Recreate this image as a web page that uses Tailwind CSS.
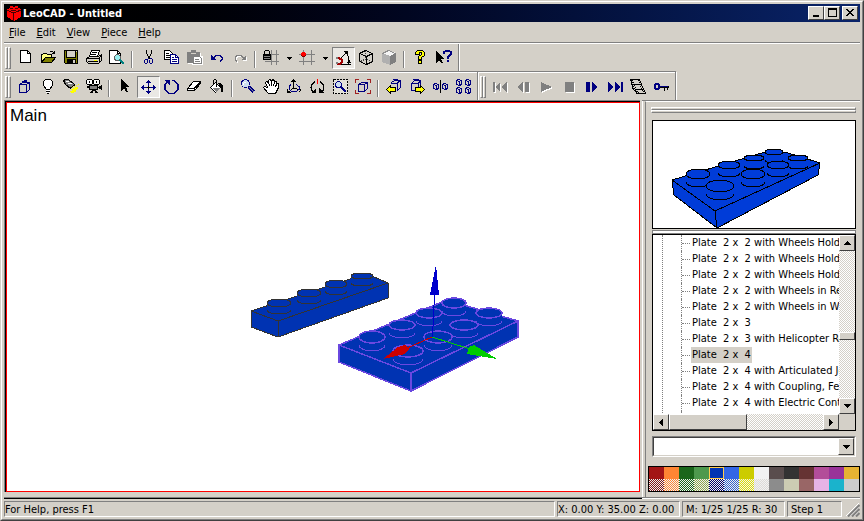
<!DOCTYPE html>
<html lang="en">
<head>
    <meta charset="UTF-8">
    <meta name="viewport" content="width=device-width, initial-scale=1.0">
    <title>LeoCAD - Untitled</title>
    <script src="https://cdn.jsdelivr.net/npm/@tailwindcss/browser@4"></script>
</head>
<body class="h-screen overflow-hidden bg-[#d4d0c8] font-['DejaVu_Sans_Condensed','DejaVu_Sans',sans-serif] text-[11px] leading-4 text-black">
<div class="h-full border border-t-[#d4d0c8] border-l-[#d4d0c8] border-r-[#404040] border-b-[#404040]">
<div class="flex h-full flex-col border border-t-white border-l-white border-r-[#808080] border-b-[#808080] p-[2px]">

    <!-- Title bar -->
    <header class="flex h-[18px] shrink-0 items-center bg-linear-to-r from-black to-[#0a246a] pr-[2px] pl-[2px]">
        <svg class="h-4 w-4" viewBox="0 0 16 16" shape-rendering="crispEdges">
            <path fill="#f00" d="M1 4l3-1V1h3v1h2V1h3v2l3 1v8l-7 4-7-4z"/>
            <path fill="none" stroke="#400" d="M1 5l6.500 3L15 5M7.500 8v8M4 3.500h3M9 3.500h3M5 5.500h5"/>
        </svg>
        <h1 class="flex-1 pt-[1px] pl-[1px] font-bold text-white">LeoCAD - Untitled</h1>
        <button aria-label="Minimize" class="flex h-[14px] w-4 items-center justify-center border border-t-white border-l-white border-r-[#404040] border-b-[#404040] bg-[#d4d0c8]">
            <svg class="h-[10px] w-3" viewBox="0 0 12 10" shape-rendering="crispEdges"><path d="M3 7h6v2H3z"/></svg>
        </button>
        <button aria-label="Maximize" class="flex h-[14px] w-4 items-center justify-center border border-t-white border-l-white border-r-[#404040] border-b-[#404040] bg-[#d4d0c8]">
            <svg class="h-[10px] w-3" viewBox="0 0 12 10" shape-rendering="crispEdges"><path d="M2 0h9v9H2zM3 2v6h7V2z" fill-rule="evenodd"/></svg>
        </button>
        <button aria-label="Close" class="ml-[2px] flex h-[14px] w-4 items-center justify-center border border-t-white border-l-white border-r-[#404040] border-b-[#404040] bg-[#d4d0c8]">
            <svg class="h-[10px] w-3" viewBox="0 0 12 10" shape-rendering="crispEdges"><path d="M2 1h2v1h1v1h2V2h1V1h2v1H9v1H8v1H7v1h1v1h1v1h1v1H8V7H7V6H5v1H4v1H2V7h1V6h1V5h1V4H4V3H3V2H2z"/></svg>
        </button>
    </header>

    <!-- Menu bar -->
    <nav class="flex h-5 shrink-0 items-center gap-[11px] pt-[1px] pl-[5px]">
        <button><u>F</u>ile</button>
        <button><u>E</u>dit</button>
        <button><u>V</u>iew</button>
        <button><u>P</u>iece</button>
        <button><u>H</u>elp</button>
    </nav>

    <!-- Standard toolbar -->
    <div class="flex h-[29px] shrink-0 border-t border-[#808080]">
        <div class="flex flex-1 border-t border-white">
            <div class="flex w-[455px] shrink-0 items-start border-r border-[#808080] pt-[3px]">
                <span class="mr-1 ml-[1px] h-[22px] w-[3px] border border-t-white border-l-white border-r-[#808080] border-b-[#808080]"></span>
                <span class="-ml-1 mr-[3px] h-[22px] w-[3px] border border-t-white border-l-white border-r-[#808080] border-b-[#808080]"></span>
                <button aria-label="New" class="flex h-[22px] w-[23px] items-center justify-center">
                    <svg class="h-4 w-[17px]" viewBox="0 0 17 16" shape-rendering="crispEdges"><path fill="#fff" stroke="#000" d="M3.500.5h7l3 3v9h-10z"/><path fill="none" stroke="#000" d="M10.500.5v3h3"/></svg>
                </button>
                <button aria-label="Open" class="flex h-[22px] w-[23px] items-center justify-center">
                    <svg class="h-4 w-[17px]" viewBox="0 0 17 16" shape-rendering="crispEdges"><path fill="#ffff80" stroke="#000" d="M1.500 12.500v-8h1l1-1h3l1 1h4v3h-6z"/><path fill="#808000" stroke="#000" d="M1.500 12.500l4-5h10l-4 5z"/><path fill="none" stroke="#000" d="M9.500 2.500l1-1h2l2 2M14.500 1v3M12 3.500h3"/></svg>
                </button>
                <button aria-label="Save" class="flex h-[22px] w-[23px] items-center justify-center">
                    <svg class="h-4 w-[17px]" viewBox="0 0 17 16" shape-rendering="crispEdges"><path fill="#808000" stroke="#000" d="M1.500.5h13v13h-12l-1-1z"/><path fill="#d4d0c8" stroke="#000" d="M3.500.5h9v7h-9z"/><path d="M4 9h9v5H4z"/><path fill="#d4d0c8" d="M10 10h2v3h-2zM13 1h1v1h-1z"/></svg>
                </button>
                <button aria-label="Print" class="flex h-[22px] w-[23px] items-center justify-center">
                    <svg class="h-4 w-[17px]" viewBox="0 0 17 16" shape-rendering="crispEdges"><path fill="#fff" stroke="#000" d="M5.500.5h8l-2 6h-8z"/><path fill="none" stroke="#000" d="M6 2.500h5M5 4.500h5"/><path fill="#d4d0c8" stroke="#000" d="M.5 8.500l3-2h9l3-2v6l-3 3h-10l-2-2z"/><path fill="none" stroke="#000" d="M1 8.500h12v4M2 11.500h10M13 8.500l2-3"/><path fill="#ff0" d="M8 10h3v1H8z"/></svg>
                </button>
                <button aria-label="Print Preview" class="flex h-[22px] w-[23px] items-center justify-center">
                    <svg class="h-4 w-[17px]" viewBox="0 0 17 16" shape-rendering="crispEdges"><path fill="#fff" stroke="#000" d="M.5.5h8l3 3v10H.5z"/><path fill="none" stroke="#000" d="M8.500.5v3h3"/><circle cx="8.500" cy="7.500" r="3" fill="#9ee" stroke="#606060"/><path fill="none" stroke="#008080" stroke-width="2" d="M11 10l4 4"/></svg>
                </button>
                <span class="mr-1 ml-[2px] h-[17px] w-[2px] self-center border-r border-l border-r-white border-l-[#808080]"></span>
                <button aria-label="Cut" class="flex h-[22px] w-[23px] items-center justify-center">
                    <svg class="h-4 w-[17px]" viewBox="0 0 17 16" shape-rendering="crispEdges"><path fill="none" stroke="#000" d="M6.500 0v3l3 6M11.500 0v3l-3 6"/><path fill="none" stroke="#000080" d="M8.500 8.500l-1 1h-2l-1 1v2l1 1h1l1-1v-3M9.500 8.500h2l1 1v3l-1 1h-1l-1-1v-3"/></svg>
                </button>
                <button aria-label="Copy" class="flex h-[22px] w-[23px] items-center justify-center">
                    <svg class="h-4 w-[17px]" viewBox="0 0 17 16" shape-rendering="crispEdges"><path fill="#fff" stroke="#000" d="M1.500.5h5l3 3v6h-8z"/><path fill="none" stroke="#000" d="M3 3.500h3M3 5.500h4M3 7.500h4"/><path fill="#fff" stroke="#000080" d="M7.500 4.500h5l3 3v6h-8z"/><path fill="none" stroke="#000080" d="M12.500 4.500v3h3M9 7.500h2M9 9.500h5M9 11.500h5"/></svg>
                </button>
                <button aria-label="Paste" disabled class="flex h-[22px] w-[23px] items-center justify-center">
                    <svg class="h-4 w-[17px]" viewBox="0 0 17 16" shape-rendering="crispEdges"><path fill="#fff" d="M2 3h13v3h2v9H6v-1H2z"/><path fill="#808080" d="M1 2h4V0h5v2h4v4H8v7H1z"/><path fill="#d4d0c8" d="M5 3h5v1H5z"/><path fill="#fff" stroke="#808080" d="M7.500 6.500h6l2 2v5h-8z"/><path stroke="#808080" d="M9 9.500h4M9 11.500h5"/></svg>
                </button>
                <button aria-label="Undo" class="flex h-[22px] w-[23px] items-center justify-center">
                    <svg class="h-4 w-[17px]" viewBox="0 0 17 16" shape-rendering="crispEdges"><path fill="#000080" d="M2 5l5 5H2z"/><path fill="none" stroke="#000080" d="M4 8.500l3-3h4l2 2v2l-2 2"/></svg>
                </button>
                <button aria-label="Redo" disabled class="flex h-[22px] w-[23px] items-center justify-center">
                    <svg class="h-4 w-[17px]" viewBox="0 0 17 16" shape-rendering="crispEdges"><path fill="#fff" d="M15 6l-5 5h5z"/><path fill="none" stroke="#fff" d="M13 9.500l-3-3H6l-2 2v2l2 2"/><path fill="#808080" d="M14 5l-5 5h5z"/><path fill="none" stroke="#808080" d="M12 8.500l-3-3H5l-2 2v2l2 2"/></svg>
                </button>
                <span class="mr-1 ml-[2px] h-[17px] w-[2px] self-center border-r border-l border-r-white border-l-[#808080]"></span>
                <button aria-label="Lock" class="flex h-[22px] w-[23px] items-center justify-center">
                    <svg class="h-4 w-[17px]" viewBox="0 0 17 16" shape-rendering="crispEdges"><path fill="none" stroke="#808080" d="M8.500 0v15M13.500 0v15M2 4.500h14M2 11.500h14"/><path d="M0 4h8v6H0z"/><path fill="none" stroke="#000" d="M1.500 4V1.500l1-1h3l1 1V4"/><path stroke="#808080" d="M1 6.500h6M1 8.500h6"/></svg>
                </button>
                <button aria-label="Lock options" class="flex h-[22px] w-[13px] items-center justify-center">
                    <svg class="h-[3px] w-[5px]" viewBox="0 0 5 3" shape-rendering="crispEdges"><path d="M0 0h5v1H4v1H3v1H2V2H1V1H0z"/></svg>
                </button>
                <button aria-label="Snap" class="flex h-[22px] w-[23px] items-center justify-center">
                    <svg class="h-4 w-[17px]" viewBox="0 0 17 16" shape-rendering="crispEdges"><path fill="none" stroke="#808080" d="M4.500 0v15M12.500 0v15M0 4.500h16M0 11.500h16"/><path fill="#800000" d="M3 2h3v1h1v3H6v1H3V6H2V3h1z"/><path fill="#f00" d="M3 2h3v1h1v2H6v1H3V5H2V3h1z"/></svg>
                </button>
                <button aria-label="Snap options" class="flex h-[22px] w-[13px] items-center justify-center">
                    <svg class="h-[3px] w-[5px]" viewBox="0 0 5 3" shape-rendering="crispEdges"><path d="M0 0h5v1H4v1H3v1H2V2H1V1H0z"/></svg>
                </button>
                <button aria-label="Angle snap" aria-pressed="true" class="flex h-[22px] w-[23px] items-center justify-center border border-t-[#808080] border-l-[#808080] border-r-white border-b-white bg-[#eae8e4]">
                    <svg class="h-4 w-[17px]" viewBox="0 0 17 16" shape-rendering="crispEdges"><path fill="none" stroke="#000" d="M5 9.500l7-8M3 14.500h13M11.500 2.500l1 2 1 3v7M10 3.500h3M9 1.500h3M12 12.500h4"/><path fill="#000" d="M11 1h2v3h-2zM13 10h2v3h-2z"/><path fill="none" stroke="#a00000" stroke-width="2" d="M1 8h3l3 2v2l-2 2H2"/><path fill="#808080" d="M1 7h2v2H1zM1 12h2v2H1z"/></svg>
                </button>
                <button aria-label="Wireframe" class="flex h-[22px] w-[23px] items-center justify-center">
                    <svg class="h-4 w-[17px]" viewBox="0 0 17 16" shape-rendering="crispEdges"><path fill="none" stroke="#000" d="M1.500 3.500l6-3 7 3v8l-6 3-7-3zM1.500 3.500l7 3 6-3M8.500 6v9"/><path fill="none" stroke="#404040" stroke-dasharray="1 1" d="M7.500 1v8l-6 3M7.500 9l7 3"/></svg>
                </button>
                <button aria-label="Shaded" class="flex h-[22px] w-[23px] items-center justify-center">
                    <svg class="h-4 w-[17px]" viewBox="0 0 17 16" shape-rendering="crispEdges"><path fill="#f4f4f4" d="M1 3l6-3 8 3-6 3z"/><path fill="#b0b0b0" d="M1 3l8 3v9l-8-3z"/><path fill="#808080" d="M9 6l6-3v9l-6 3z"/><path fill="none" stroke="#909090" d="M1.500 3.500l6-3 7 3"/></svg>
                </button>
                <span class="mr-1 ml-[2px] h-[17px] w-[2px] self-center border-r border-l border-r-white border-l-[#808080]"></span>
                <button aria-label="About" class="flex h-[22px] w-[23px] items-center justify-center">
                    <svg class="h-4 w-[17px]" viewBox="0 0 17 16" shape-rendering="crispEdges"><path fill="#ff0" stroke="#000" d="M3.500 4.500v-2l2-2h5l2 2v3l-3 2v2h-3v-3l3-2v-2h-2v2zM6.500 10.500h3v3h-3z"/></svg>
                </button>
                <button aria-label="Context help" class="flex h-[22px] w-[23px] items-center justify-center">
                    <svg class="h-4 w-[17px]" viewBox="0 0 17 16" shape-rendering="crispEdges"><path d="M1 1l8 8H6l2 4H6l-2-3-3 3z"/><path fill="none" stroke="#000080" stroke-width="2" d="M9 4V2l2-1h3l2 1v2l-3 3v2M12 11h2"/></svg>
                </button>
            </div>
            <span class="w-[1px] bg-white"></span>
        </div>
    </div>

    <!-- Tools and animation toolbars -->
    <div class="flex h-[29px] shrink-0">
        <div class="flex w-[474px] shrink-0 flex-col border-t border-r border-[#808080]">
            <div class="flex flex-1 items-start border-t border-white pt-[3px]">
                <span class="mr-1 ml-[1px] h-[22px] w-[3px] border border-t-white border-l-white border-r-[#808080] border-b-[#808080]"></span>
                <span class="-ml-1 mr-[3px] h-[22px] w-[3px] border border-t-white border-l-white border-r-[#808080] border-b-[#808080]"></span>
                <button aria-label="Insert piece" class="flex h-[22px] w-[23px] items-center justify-center">
                    <svg class="h-4 w-[17px]" viewBox="0 0 17 16" shape-rendering="crispEdges"><path fill="none" stroke="#000080" d="M2.500 5.500l3-2h7v7l-3 3h-7zM2.500 5.500h7v8M9.500 5.500l3-2M5.500 4V2.500h4V4M7 1.500h3"/></svg>
                </button>
                <button aria-label="Light" class="flex h-[22px] w-[23px] items-center justify-center">
                    <svg class="h-4 w-[17px]" viewBox="0 0 17 16" shape-rendering="crispEdges"><path fill="#fff" stroke="#000" d="M5.500.5h5l2 2v4l-3 4h-3l-3-4v-4z"/><path stroke="#000" d="M6 10.500h4M6 12.500h4M7 14.500h2"/><path stroke="#fff" d="M6 11.500h4M6 13.500h4"/></svg>
                </button>
                <button aria-label="Spotlight" class="flex h-[22px] w-[23px] items-center justify-center">
                    <svg class="h-4 w-[17px]" viewBox="0 0 17 16" shape-rendering="crispEdges"><path fill="#ff0" d="M9 8h1v1H9zM11 7h1v1h-1zM13 6h1v1h-1zM15 5h1v1h-1zM10 9h5v1h-5zM8 10h6v1H8zM9 11h4v1H9zM7 12h6v1H7zM8 13h3v1H8zM12 8h3v1h-3z"/><path fill="#808080" stroke="#000" d="M.5 1.500l2-1h3l6 5-4 4-5-4z"/><path stroke="#fff" d="M3 2.500h3M5 4.500h4"/><path stroke="#000" d="M7 9.500l5-4"/></svg>
                </button>
                <button aria-label="Camera" class="flex h-[22px] w-[23px] items-center justify-center">
                    <svg class="h-4 w-[17px]" viewBox="0 0 17 16" shape-rendering="crispEdges"><path fill="#fff" stroke="#000" d="M1.500.5h4l1 1v3l-1 1h-4l-1-1v-3zM8.500.5h4l1 1v3l-1 1h-4l-1-1v-3z"/><path d="M3 2h1v2H3zM10 2h1v2h-1z"/><path fill="#808080" stroke="#000" d="M3.500 6.500h8v4h-8z"/><path d="M12 8l4-2v5l-4-2zM1 7h2v2H1zM6 11h4v1H6zM5 12h2v2H4v-1h1zM9 12h2v1h1v1H9z"/></svg>
                </button>
                <span class="mr-1 ml-[2px] h-[17px] w-[2px] self-center border-r border-l border-r-white border-l-[#808080]"></span>
                <button aria-label="Select" class="flex h-[22px] w-[23px] items-center justify-center">
                    <svg class="h-4 w-[17px]" viewBox="0 0 17 16" shape-rendering="crispEdges"><path d="M4 0l8 8H9l2 5H9L7 9l-3 3z"/></svg>
                </button>
                <button aria-label="Move" aria-pressed="true" class="flex h-[22px] w-[23px] items-center justify-center border border-t-[#808080] border-l-[#808080] border-r-white border-b-white bg-[#eae8e4]">
                    <svg class="h-4 w-[17px]" viewBox="0 0 17 16" shape-rendering="crispEdges"><path fill="#000080" d="M8 1h1v1h1v1h1v1H6V3h1V2h1zM8 15h1v-1h1v-1h1v-1H6v1h1v1h1zM1 8h1V7h1V6h1v5H3v-1H2V9H1zM16 8h-1V7h-1V6h-1v5h1v-1h1V9h1z"/><path stroke="#000080" d="M8.500 3v4M8.500 9v4M3 8.500h4M10 8.500h4"/><path d="M8 7h1v3H8zM7 8h3v1H7z"/></svg>
                </button>
                <button aria-label="Rotate" class="flex h-[22px] w-[23px] items-center justify-center">
                    <svg class="h-4 w-[17px]" viewBox="0 0 17 16" shape-rendering="crispEdges"><path fill="none" stroke="#000080" stroke-width="1.500" d="M9 1.500h2l4 4v5l-4 4H6l-4-4v-5l3-3"/><path fill="#000080" d="M1 1h6v6z"/></svg>
                </button>
                <button aria-label="Erase" class="flex h-[22px] w-[23px] items-center justify-center">
                    <svg class="h-4 w-[17px]" viewBox="0 0 17 16" shape-rendering="crispEdges"><path fill="#fff" stroke="#000" d="M1.500 9.500l6-7h7v2l-6 7h-7z"/><path fill="none" stroke="#000" d="M2 9.500h6l6-6M8.500 10v2"/></svg>
                </button>
                <button aria-label="Paint" class="flex h-[22px] w-[23px] items-center justify-center">
                    <svg class="h-4 w-[17px]" viewBox="0 0 17 16" shape-rendering="crispEdges"><path fill="#fff" stroke="#000" d="M1.500 8.500l5-5 5 5-5 5z"/><path fill="#808080" d="M3 9h8l-4 4z"/><path fill="none" stroke="#000" d="M4.500 6V1.500l1-1h1l1 1V8"/><path d="M9 4h3l2 3v6h-2V9z"/></svg>
                </button>
                <span class="mr-1 ml-[2px] h-[17px] w-[2px] self-center border-r border-l border-r-white border-l-[#808080]"></span>
                <button aria-label="Zoom" class="flex h-[22px] w-[23px] items-center justify-center">
                    <svg class="h-4 w-[17px]" viewBox="0 0 17 16" shape-rendering="crispEdges"><circle cx="5.500" cy="4.500" r="4" fill="#cde" stroke="#000080"/><path fill="none" stroke="#fff" d="M4 3.500h2M3.500 4v2"/><path stroke="#000080" stroke-width="3" d="M9 8l5 5"/><path stroke="#88a" d="M9 8l5 5"/></svg>
                </button>
                <button aria-label="Pan" class="flex h-[22px] w-[23px] items-center justify-center">
                    <svg class="h-4 w-[17px]" viewBox="0 0 17 16" shape-rendering="crispEdges"><path fill="#fff" stroke="#000" d="M5.500 14.500l-5-6 1-1 3 1-2-5 1-1 2 1v-2l1-1 2 1 2-1 1 2 2 0v2l2 0 0 4-3 6z"/><path fill="none" stroke="#000" d="M5.500 3l1 4M8.500 2v5M11.500 3l-1 4M13.500 5l-1 3"/></svg>
                </button>
                <button aria-label="Rotate view" class="flex h-[22px] w-[23px] items-center justify-center">
                    <svg class="h-4 w-[17px]" viewBox="0 0 17 16" shape-rendering="crispEdges"><path fill="none" stroke="#000" d="M7.500 9V0M5 2.500h5M6 1.500h3M7.500 9l-6 5M7.500 9l7 2M1.500 10v4M1 13.500h4M13 9l2 2-2 2"/><path fill="none" stroke="#000080" d="M5 5.500l-2 2v3l3 2h4l3-2v-3l-3-2"/></svg>
                </button>
                <button aria-label="Roll" class="flex h-[22px] w-[23px] items-center justify-center">
                    <svg class="h-4 w-[17px]" viewBox="0 0 17 16" shape-rendering="crispEdges"><path stroke="#f00" d="M8.500 0v5"/><path fill="none" stroke="#000" d="M6 2.500l-3 3-1 3 1 3 2 2M11 2.500l3 3 1 3-1 3-2 2"/><path d="M2 14h5V9zM15 14h-5V9z"/></svg>
                </button>
                <button aria-label="Zoom region" class="flex h-[22px] w-[23px] items-center justify-center">
                    <svg class="h-4 w-[17px]" viewBox="0 0 17 16" shape-rendering="crispEdges"><path fill="#e4e2da" stroke="#000" stroke-dasharray="2 1" d="M1.500.5h14v14h-14z"/><circle cx="6.500" cy="5.500" r="3" fill="#cde" stroke="#000080"/><path stroke="#000080" stroke-width="2" d="M9 8l5 5"/></svg>
                </button>
                <button aria-label="Zoom extents" class="flex h-[22px] w-[23px] items-center justify-center">
                    <svg class="h-4 w-[17px]" viewBox="0 0 17 16" shape-rendering="crispEdges"><path fill="none" stroke="#a02020" d="M.5 4V.5H4M12 .5h3.500V4M.5 11v3.500H4M12 14.500h3.500V11"/><path fill="none" stroke="#000080" d="M3.500 5.500l3-2h6v6l-3 3h-6zM3.500 5.500h6v7M9.500 5.500l3-2"/></svg>
                </button>
                <span class="mr-1 ml-[2px] h-[17px] w-[2px] self-center border-r border-l border-r-white border-l-[#808080]"></span>
                <button aria-label="Previous" class="flex h-[22px] w-[23px] items-center justify-center">
                    <svg class="h-4 w-[17px]" viewBox="0 0 17 16" shape-rendering="crispEdges"><path fill="none" stroke="#000080" d="M5.500 5V3.500l3-2h6v7l-3 3M5 4.500h6v7M11 4.500l3-3M7 .5h5"/><path fill="#ff0" stroke="#000" d="M.5 10.500l4-4v2h5v4h-5v2z"/></svg>
                </button>
                <button aria-label="Next" class="flex h-[22px] w-[23px] items-center justify-center">
                    <svg class="h-4 w-[17px]" viewBox="0 0 17 16" shape-rendering="crispEdges"><path fill="none" stroke="#000080" d="M2.500 11.500v-7l3-3h6v5M2 4.500h7v3M9 4.500l3-3M4 .5h6M2 11.500h4"/><path fill="#ff0" stroke="#000" d="M15.500 10.500l-4-4v2h-5v4h5v2z"/></svg>
                </button>
                <button aria-label="Mirror" class="flex h-[22px] w-[23px] items-center justify-center">
                    <svg class="h-4 w-[17px]" viewBox="0 0 17 16" shape-rendering="crispEdges"><path stroke="#000" d="M8.500 1v13"/><path fill="none" stroke="#000080" d="M1.500 5.500l2-1 3 1v4l-2 1-3-1zM2 5.500l2 1 2-1M4.500 7v3M10.500 5.500l2-1 3 1v4l-2 1-3-1zM11 5.500l2 1 2-1M13.500 7v3"/></svg>
                </button>
                <button aria-label="Array" class="flex h-[22px] w-[23px] items-center justify-center">
                    <svg class="h-4 w-[17px]" viewBox="0 0 17 16" shape-rendering="crispEdges"><path fill="none" stroke="#000080" d="M1.500 1.500l2-1 3 1v4l-2 1-3-1zM2 1.500l2 1 2-1M4.500 3v3M10.500 1.500l2-1 3 1v4l-2 1-3-1zM11 1.500l2 1 2-1M13.500 3v3M1.500 9.500l2-1 3 1v4l-2 1-3-1zM2 9.500l2 1 2-1M4.500 11v3M10.500 9.500l2-1 3 1v4l-2 1-3-1zM11 9.500l2 1 2-1M13.500 11v3"/></svg>
                </button>
            </div>
        </div>
        <div class="flex w-[198px] shrink-0 flex-col border-t border-r border-[#808080]">
            <div class="flex flex-1 items-start border-t border-l border-white pt-[3px]">
                <span class="mr-1 ml-[1px] h-[22px] w-[3px] border border-t-white border-l-white border-r-[#808080] border-b-[#808080]"></span>
                <span class="-ml-1 mr-[3px] h-[22px] w-[3px] border border-t-white border-l-white border-r-[#808080] border-b-[#808080]"></span>
                <button aria-label="First" disabled class="flex h-[22px] w-[23px] items-center justify-center">
                    <svg class="h-4 w-[17px]" viewBox="0 0 17 16" shape-rendering="crispEdges"><path fill="#fff" d="M2 4h2v10H2zM9 4v10L4 9zM16 4v10l-6-5z"/><path fill="#808080" d="M1 3h2v10H1zM8 3v10L3 8zM15 3v10L9 8z"/></svg>
                </button>
                <button aria-label="Step back" disabled class="flex h-[22px] w-[23px] items-center justify-center">
                    <svg class="h-4 w-[17px]" viewBox="0 0 17 16" shape-rendering="crispEdges"><path fill="#fff" d="M9 4v10L3 9zM11 4h4v10h-4z"/><path fill="#808080" d="M8 3v10L2 8zM10 3h4v10h-4z"/></svg>
                </button>
                <button aria-label="Play" disabled class="flex h-[22px] w-[23px] items-center justify-center">
                    <svg class="h-4 w-[17px]" viewBox="0 0 17 16" shape-rendering="crispEdges"><path fill="#fff" d="M4 4v10l11-5z"/><path fill="#808080" d="M3 3v10l11-5z"/></svg>
                </button>
                <button aria-label="Stop" disabled class="flex h-[22px] w-[23px] items-center justify-center">
                    <svg class="h-4 w-[17px]" viewBox="0 0 17 16" shape-rendering="crispEdges"><path fill="#fff" d="M5 4h9v10H5z"/><path fill="#808080" d="M4 3h9v10H4z"/></svg>
                </button>
                <button aria-label="Step forward" class="flex h-[22px] w-[23px] items-center justify-center">
                    <svg class="h-4 w-[17px]" viewBox="0 0 17 16" shape-rendering="crispEdges"><path fill="#000080" d="M2 3h4v10H2zM8 3v10l6-5z"/></svg>
                </button>
                <button aria-label="Last" class="flex h-[22px] w-[23px] items-center justify-center">
                    <svg class="h-4 w-[17px]" viewBox="0 0 17 16" shape-rendering="crispEdges"><path fill="#000080" d="M1 3v10l6-5zM8 3v10l6-5zM14 3h2v10h-2z"/></svg>
                </button>
                <button aria-label="Animation" class="flex h-[22px] w-[23px] items-center justify-center">
                    <svg class="h-4 w-[17px]" viewBox="0 0 17 16" shape-rendering="crispEdges"><path fill="#d4d0c8" stroke="#000" d="M.5.5h9l2 5 4 9H7l-4-5z"/><path fill="none" stroke="#000" stroke-width="2" stroke-dasharray="1 1" d="M2 1l2 6 4 7M9 1l2 6 4 7"/><path stroke="#000" d="M4 5.500h6M6 10.500h6"/></svg>
                </button>
                <button aria-label="Key" class="flex h-[22px] w-[23px] items-center justify-center">
                    <svg class="h-4 w-[17px]" viewBox="0 0 17 16" shape-rendering="crispEdges"><path fill="none" stroke="#000080" stroke-width="2" d="M2 6l1-1h2l1 1v3l-1 1H3L2 9z"/><path d="M7 7h9v2h-1v2h-1V9h-2v3h-1V9H7z"/><path fill="#000080" d="M7 7h8v1H7z"/></svg>
                </button>
            </div>
        </div>
        <span class="mt-[1px] w-[1px] bg-white"></span>
    </div>

    <!-- Workspace -->
    <main class="flex min-h-0 flex-1">
        <section class="mb-[5px] flex min-w-0 flex-1 border-t border-l border-[#808080]">
            <div class="relative flex-1 overflow-hidden border-t border-l border-black">
                <div class="h-full border border-[#f00] bg-white">
                    <svg class="absolute inset-0 h-full w-full" shape-rendering="crispEdges" aria-label="Model view">
                        <g transform="translate(-6 -103)" stroke-width="1">
                            <g fill="#0033b2" stroke="#333">
                                <path d="M251 312L350 280l22-3 16 7v15l-110 39-27-10z"/>
                                <path fill="none" d="M251 312l27 10 110-38M278 322v16"/>
                                <g id="small-studs"></g>
                            </g>
                            <g fill="#0033b2" stroke="#6a48e0" stroke-width="1.500">
                                <path d="M339 346l103-43 25 4 51 15v16l-107 54-72-29z"/>
                                <path fill="none" d="M339 346l72 28 107-52M411 374v18"/>
                                <g id="large-studs"></g>
                            </g>
                            <path stroke="#00c" d="M432.500 338l2-42"/>
                            <path fill="#00c" d="M430 296h9l-3-30z"/>
                            <path stroke="#c00" d="M432 338l-27 12"/>
                            <path fill="#c00" d="M383 360l15-12 7-2 4 4-4 5z"/>
                            <path stroke="#0c0" d="M432 338l38 12"/>
                            <path fill="#0c0" d="M497 360l-23-14-5 2-2 7z"/>
                        </g>
                    </svg>
                    <p class="relative pt-[3px] pl-[3px] font-['Liberation_Sans',sans-serif] text-[17px] leading-5">Main</p>
                </div>
            </div>
        </section>

        <aside class="ml-[2px] flex w-[218px] shrink-0 border-t border-[#808080]">
            <span class="w-[3px] border-l border-white"></span>
            <div class="flex min-w-0 flex-1 flex-col border-t border-l border-t-white border-l-[#808080] pb-[5px] pl-[2px]">
                <div class="mt-[5px] mr-1 ml-[3px] h-[3px] border border-t-white border-l-white border-r-[#808080] border-b-[#808080]"></div>
                <div class="mr-1 ml-[3px] h-[3px] border border-t-white border-l-white border-r-[#808080] border-b-[#808080]"></div>

                <div class="mt-[7px] mr-1 ml-1 h-[109px] shrink-0 border border-black bg-white">
                    <svg class="h-full w-full" viewBox="653 121 202 107" shape-rendering="crispEdges" aria-label="Piece preview">
                        <g fill="#003cd8" stroke="#000">
                            <path d="M672 180l93-28 20 0 35 11-2 12-101 53-43-33z"/>
                            <path fill="none" d="M672 180l43 31 105-48M715 211l2 17"/>
                            <g id="preview-studs"></g>
                        </g>
                    </svg>
                </div>
                <div class="mt-[1px] mr-1 ml-1 h-1 shrink-0 border border-[#808080] bg-white"></div>

                <!-- Piece list -->
                <div class="mr-1 ml-1 flex min-h-0 flex-1 flex-col border border-black bg-white">
                    <div class="flex min-h-0 flex-1">
                        <div class="min-w-0 flex-1 overflow-hidden pl-[9px]">
                            <ul class="border-l border-dotted border-[#808080] pl-[18px]">
                                <li class="flex h-4 items-center border-l border-dotted border-[#808080]"><span class="mr-[1px] w-2 shrink-0 border-t border-dotted border-[#808080]"></span><span class="px-[1px] whitespace-pre">Plate  2 x  2 with Wheels Holder</span></li>
                                <li class="flex h-4 items-center border-l border-dotted border-[#808080]"><span class="mr-[1px] w-2 shrink-0 border-t border-dotted border-[#808080]"></span><span class="px-[1px] whitespace-pre">Plate  2 x  2 with Wheels Holder</span></li>
                                <li class="flex h-4 items-center border-l border-dotted border-[#808080]"><span class="mr-[1px] w-2 shrink-0 border-t border-dotted border-[#808080]"></span><span class="px-[1px] whitespace-pre">Plate  2 x  2 with Wheels Holder</span></li>
                                <li class="flex h-4 items-center border-l border-dotted border-[#808080]"><span class="mr-[1px] w-2 shrink-0 border-t border-dotted border-[#808080]"></span><span class="px-[1px] whitespace-pre">Plate  2 x  2 with Wheels in Red</span></li>
                                <li class="flex h-4 items-center border-l border-dotted border-[#808080]"><span class="mr-[1px] w-2 shrink-0 border-t border-dotted border-[#808080]"></span><span class="px-[1px] whitespace-pre">Plate  2 x  2 with Wheels in White</span></li>
                                <li class="flex h-4 items-center border-l border-dotted border-[#808080]"><span class="mr-[1px] w-2 shrink-0 border-t border-dotted border-[#808080]"></span><span class="px-[1px] whitespace-pre">Plate  2 x  3</span></li>
                                <li class="flex h-4 items-center border-l border-dotted border-[#808080]"><span class="mr-[1px] w-2 shrink-0 border-t border-dotted border-[#808080]"></span><span class="px-[1px] whitespace-pre">Plate  2 x  3 with Helicopter Rotor</span></li>
                                <li class="flex h-4 items-center border-l border-dotted border-[#808080]"><span class="mr-[1px] w-2 shrink-0 border-t border-dotted border-[#808080]"></span><span class="bg-[#d4d0c8] px-[1px] whitespace-pre">Plate  2 x  4</span></li>
                                <li class="flex h-4 items-center border-l border-dotted border-[#808080]"><span class="mr-[1px] w-2 shrink-0 border-t border-dotted border-[#808080]"></span><span class="px-[1px] whitespace-pre">Plate  2 x  4 with Articulated Joint</span></li>
                                <li class="flex h-4 items-center border-l border-dotted border-[#808080]"><span class="mr-[1px] w-2 shrink-0 border-t border-dotted border-[#808080]"></span><span class="px-[1px] whitespace-pre">Plate  2 x  4 with Coupling, Female</span></li>
                                <li class="flex h-4 items-center border-l border-dotted border-[#808080]"><span class="mr-[1px] w-2 shrink-0 border-t border-dotted border-[#808080]"></span><span class="px-[1px] whitespace-pre">Plate  2 x  4 with Electric Contacts</span></li>
                                <li class="h-4 border-l border-dotted border-[#808080]"></li>
                            </ul>
                        </div>
                        <div class="flex w-4 shrink-0 flex-col bg-[repeating-conic-gradient(#fff_0_25%,#d4d0c8_0_50%)] bg-[length:2px_2px]">
                            <button aria-label="Scroll up" class="flex h-4 shrink-0 items-center justify-center border border-t-white border-l-white border-r-[#404040] border-b-[#404040] bg-[#d4d0c8]">
                                <svg class="h-1 w-[7px]" viewBox="0 0 7 4" shape-rendering="crispEdges"><path d="M3 0h1v1h1v1h1v1h1v1H0V3h1V2h1V1h1z"/></svg>
                            </button>
                            <span class="flex-[81]"></span>
                            <span class="h-2 shrink-0 border border-t-white border-l-white border-r-[#404040] border-b-[#404040] bg-[#d4d0c8]"></span>
                            <span class="flex-[58]"></span>
                            <button aria-label="Scroll down" class="flex h-4 shrink-0 items-center justify-center border border-t-white border-l-white border-r-[#404040] border-b-[#404040] bg-[#d4d0c8]">
                                <svg class="h-1 w-[7px]" viewBox="0 0 7 4" shape-rendering="crispEdges"><path d="M0 0h7v1H6v1H5v1H4v1H3V3H2V2H1V1H0z"/></svg>
                            </button>
                        </div>
                    </div>
                    <div class="flex h-4 shrink-0">
                        <div class="flex flex-1 bg-[repeating-conic-gradient(#fff_0_25%,#d4d0c8_0_50%)] bg-[length:2px_2px]">
                            <button aria-label="Scroll left" class="flex w-4 items-center justify-center border border-t-white border-l-white border-r-[#404040] border-b-[#404040] bg-[#d4d0c8]">
                                <svg class="h-[7px] w-1" viewBox="0 0 4 7" shape-rendering="crispEdges"><path d="M4 0v7H3V6H2V5H1V4H0V3h1V2h1V1h1V0z"/></svg>
                            </button>
                            <span class="flex-1 border border-t-white border-l-white border-r-[#404040] border-b-[#404040] bg-[#d4d0c8]"></span>
                            <span class="flex-1"></span>
                            <button aria-label="Scroll right" class="flex w-4 items-center justify-center border border-t-white border-l-white border-r-[#404040] border-b-[#404040] bg-[#d4d0c8]">
                                <svg class="h-[7px] w-1" viewBox="0 0 4 7" shape-rendering="crispEdges"><path d="M0 0v7h1V6h1V5h1V4h1V3H3V2H2V1H1V0z"/></svg>
                            </button>
                        </div>
                        <span class="w-4 bg-[#d4d0c8]"></span>
                    </div>
                </div>

                <div class="relative mt-[5px] mr-1 ml-1 h-[21px] shrink-0 border border-t-[#808080] border-l-[#808080] border-r-white border-b-white">
                    <select aria-label="Piece" class="block h-full w-full appearance-none border border-t-[#404040] border-l-[#404040] border-r-[#d4d0c8] border-b-[#d4d0c8] bg-white px-1"><option></option></select>
                    <span class="pointer-events-none absolute inset-y-[1px] right-[1px] flex w-4 items-center justify-center border border-t-white border-l-white border-r-[#404040] border-b-[#404040] bg-[#d4d0c8]">
                        <svg class="h-1 w-[7px]" viewBox="0 0 7 4" shape-rendering="crispEdges"><path d="M0 0h7v1H6v1H5v1H4v1H3V3H2V2H1V1H0z"/></svg>
                    </span>
                </div>

                <!-- Color palette -->
                <div class="mt-[9px] grid shrink-0 grid-cols-14 border border-black">
                    <button aria-label="Red" class="h-3 bg-[#a31515]"></button>
                    <button aria-label="Orange" class="h-3 bg-[#ff8533]"></button>
                    <button aria-label="Green" class="h-3 bg-[#1a661a]"></button>
                    <button aria-label="Light green" class="h-3 bg-[#4d994d]"></button>
                    <button aria-label="Blue" class="h-3 border border-[#ffcc4d] bg-[#0033b2]"></button>
                    <button aria-label="Light blue" class="h-3 bg-[#3366e6]"></button>
                    <button aria-label="Yellow" class="h-3 bg-[#cccc00]"></button>
                    <button aria-label="White" class="h-3 bg-[#f2f2f2]"></button>
                    <button aria-label="Dark gray" class="h-3 bg-[#594d4d]"></button>
                    <button aria-label="Black" class="h-3 bg-[#333333]"></button>
                    <button aria-label="Brown" class="h-3 bg-[#663333]"></button>
                    <button aria-label="Pink" class="h-3 bg-[#b34d99]"></button>
                    <button aria-label="Purple" class="h-3 bg-[#993399]"></button>
                    <button aria-label="Gold" class="h-3 bg-[#e6b333]"></button>
                    <button aria-label="Clear red" class="h-3 bg-[repeating-conic-gradient(#801818_0_25%,#f0f0f0_0_50%)] bg-[length:2px_2px]"></button>
                    <button aria-label="Clear orange" class="h-3 bg-[repeating-conic-gradient(#ff8533_0_25%,#f0f0f0_0_50%)] bg-[length:2px_2px]"></button>
                    <button aria-label="Clear green" class="h-3 bg-[repeating-conic-gradient(#1a661a_0_25%,#f0f0f0_0_50%)] bg-[length:2px_2px]"></button>
                    <button aria-label="Clear light green" class="h-3 bg-[repeating-conic-gradient(#8ca64d_0_25%,#f0f0f0_0_50%)] bg-[length:2px_2px]"></button>
                    <button aria-label="Clear blue" class="h-3 bg-[repeating-conic-gradient(#000066_0_25%,#f0f0f0_0_50%)] bg-[length:2px_2px]"></button>
                    <button aria-label="Clear light blue" class="h-3 bg-[repeating-conic-gradient(#3366cc_0_25%,#f0f0f0_0_50%)] bg-[length:2px_2px]"></button>
                    <button aria-label="Clear yellow" class="h-3 bg-[repeating-conic-gradient(#e0e000_0_25%,#f0f0f0_0_50%)] bg-[length:2px_2px]"></button>
                    <button aria-label="Clear white" class="h-3 bg-[repeating-conic-gradient(#f2f2f2_0_25%,#dcdad6_0_50%)] bg-[length:2px_2px]"></button>
                    <button aria-label="Gray" class="h-3 bg-[#8c8c8c]"></button>
                    <button aria-label="Tan" class="h-3 bg-[#ccccb3]"></button>
                    <button aria-label="Light brown" class="h-3 bg-[#996666]"></button>
                    <button aria-label="Light pink" class="h-3 bg-[#e6b3e6]"></button>
                    <button aria-label="Cyan" class="h-3 bg-[#1ab3cc]"></button>
                    <button aria-label="Chrome" class="h-3 bg-[#cccccc]"></button>
                </div>
            </div>
        </aside>
    </main>

    <div class="mb-[2px] flex h-[2px] shrink-0">
        <span class="flex-1 border-t border-b border-t-[#808080] border-b-black"></span>
        <span class="w-[218px] border-t border-b border-t-[#808080] border-b-white"></span>
    </div>

    <!-- Status bar -->
    <footer class="flex h-4 shrink-0 gap-[2px] leading-4 whitespace-nowrap">
        <span class="flex-1 border border-t-[#808080] border-l-[#808080] border-r-white border-b-white">For Help, press F1</span>
        <span class="w-[123px] border border-t-[#808080] border-l-[#808080] border-r-white border-b-white">X: 0.00 Y: 35.00 Z: 0.00</span>
        <span class="w-[103px] border border-t-[#808080] border-l-[#808080] border-r-white border-b-white pl-[3px]">M: 1/25 1/25 R: 30</span>
        <span class="w-[55px] border border-t-[#808080] border-l-[#808080] border-r-white border-b-white pl-[3px]">Step 1</span>
        <svg class="h-4 w-4" viewBox="0 0 16 16"><path stroke="#fff" d="M2 15L15 2M6 15l9-9M10 15l5-5"/><path stroke="#808080" stroke-width="2" d="M4 15.500L15.500 4M8 15.500L15.500 8M12 15.500l3.500-3.500"/></svg>
    </footer>
</div>
</div>

<script>
    // [cx, cy, rx, ry] of the top of each stud, far to near
    const smallStuds = [[362, 277, 11, 3], [336, 285, 11, 4], [309, 294, 12, 4], [279, 304, 12, 4]];
    const largeStuds = [[454, 304, 12, 5], [489, 314, 13, 5], [429, 314, 13, 5], [464, 326, 14, 5], [402, 326, 13, 5], [438, 338, 14, 6], [372, 338, 13, 6], [408, 352, 15, 6]];
    const previewStuds = [[774, 152, 9, 3], [798, 158, 10, 3], [754, 158, 10, 3], [778, 165, 11, 4], [729, 165, 11, 4], [753, 174, 12, 5], [698, 174, 12, 5], [720, 186, 14, 6]];

    function drawStuds(id, studs, height) {
        document.getElementById(id).innerHTML = studs.map(([x, y, rx, ry]) => `
            <path stroke="none" d="M${x - rx} ${y}v${height}a${rx} ${ry} 0 0 0 ${rx * 2} 0v${-height}z"/>
            <path fill="none" stroke-width="1" d="M${x - rx} ${y + height}a${rx} ${ry} 0 0 0 ${rx * 2} 0"/>
            <ellipse cx="${x}" cy="${y}" rx="${rx}" ry="${ry}"/>
        `).join('');
    }

    drawStuds('small-studs', smallStuds, 7);
    drawStuds('large-studs', largeStuds, 8);
    drawStuds('preview-studs', previewStuds, 8);
</script>
</body>
</html>
